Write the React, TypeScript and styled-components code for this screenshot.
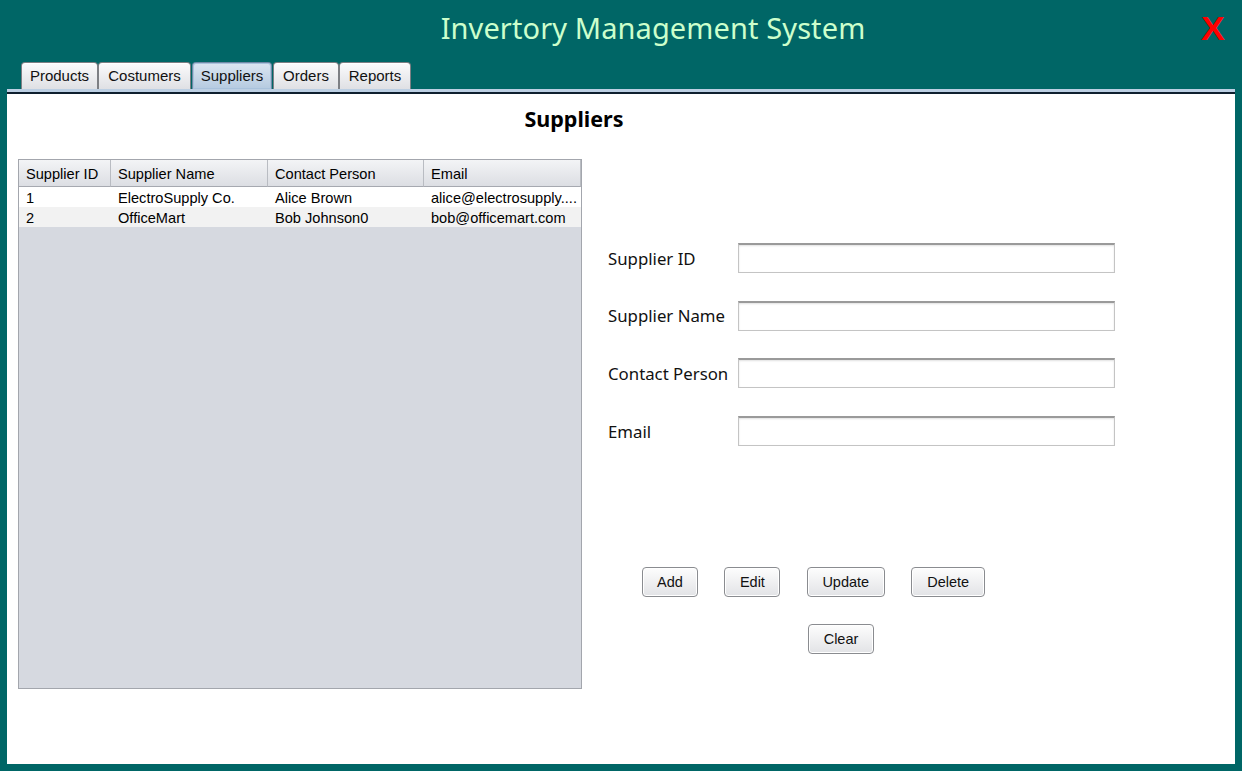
import React from "react";
import styled, { createGlobalStyle } from "styled-components";

const Global = createGlobalStyle`
  html, body { margin: 0; padding: 0; background: #006666; }
  #root { width: 1242px; height: 771px; }
  * { box-sizing: border-box; }
`;

const Frame = styled.div`
  width: 1242px;
  height: 771px;
  display: flex;
  flex-direction: column;
  background: #006666;
`;

const Header = styled.header`
  height: 62px;
  display: flex;
  align-items: center;
  padding: 0 17px 7px 116px;
`;

const Title = styled.h1`
  flex: 1;
  margin: 0;
  text-align: center;
  font-family: "Noto Sans", "Open Sans", sans-serif;
  font-weight: 400;
  font-size: 29px;
  color: #ccffcc;
  letter-spacing: 0.1px;
`;

const Close = styled.span`
  width: 24px;
  margin-left: 11px;
  font-family: "Liberation Sans", Arial, sans-serif;
  font-weight: 700;
  font-size: 34px;
  line-height: 1;
  color: #ff0000;
  text-align: center;
  transform: scaleX(1.05);
`;

const TabRow = styled.nav`
  height: 27px;
  margin: 0 7px;
  padding-left: 14px;
  display: flex;
  align-items: flex-end;
`;

const Tab = styled.div<{ $active?: boolean; $w: number }>`
  width: ${(p) => p.$w}px;
  height: 27px;
  padding-bottom: 1px;
  margin: 0 ${(p) => (p.$active ? "1px" : "0")};
  display: flex;
  align-items: center;
  justify-content: center;
  font-family: "Liberation Sans", Arial, sans-serif;
  font-size: 15px;
  color: #111;
  border: 1px solid ${(p) => (p.$active ? "#6f8aa6" : "#7d7f84")};
  border-bottom: none;
  border-radius: 4px 4px 0 0;
  background: ${(p) =>
    p.$active
      ? "linear-gradient(#dbe6f1, #b5cae0)"
      : "linear-gradient(#fbfbfc, #dfe0e4)"};
  box-shadow: ${(p) => (p.$active ? "inset 0 0 0 1px #a9c2dc" : "inset 0 1px 0 #fff")};
`;

const Strip = styled.div`
  height: 5px;
  margin: 0 7px;
  background: #bccfe3;
  border-bottom: 2px solid #0f1f2e;
`;

const Panel = styled.main`
  flex: 1;
  margin: 0 7px 7px;
  background: #fff;
  display: flex;
  flex-direction: column;
`;

const Heading = styled.h2`
  margin: 0;
  height: 65px;
  padding: 10px 94px 0 0;
  text-align: center;
  font-family: "Noto Sans", "Open Sans", sans-serif;
  font-weight: 700;
  font-size: 21.5px;
  color: #000;
`;

const Body = styled.div`
  display: flex;
  padding-left: 11px;
`;

const Table = styled.div`
  width: 564px;
  height: 530px;
  border: 1px solid #a3a6ad;
  background: #d6d9e0;
  font-family: "Liberation Sans", Arial, sans-serif;
  font-size: 14.6px;
  color: #000;
`;

const Grid = styled.div`
  display: grid;
  grid-template-columns: 92px 157px 156px 157px;
`;

const HeadCell = styled.div`
  height: 27px;
  padding: 1px 7px 0;
  display: flex;
  align-items: center;
  background: linear-gradient(#f3f4f6, #dcdee3);
  border-right: 1px solid #b9bcc2;
  border-bottom: 1px solid #a6a9b0;
  &:last-child { border-right: none; }
`;

const Cell = styled.div<{ $alt?: boolean }>`
  height: 20px;
  padding: 2px 7px 0;
  display: flex;
  align-items: center;
  white-space: nowrap;
  overflow: hidden;
  background: ${(p) => (p.$alt ? "#f2f2f2" : "#fff")};
`;

const Form = styled.section`
  margin-left: 26px;
  padding-top: 84px;
  display: flex;
  flex-direction: column;
`;

const Fields = styled.div`
  display: grid;
  grid-template-columns: 130px 377px;
  row-gap: 27.7px;
  align-items: center;
`;

const Label = styled.label`
  font-family: "Noto Sans", "Open Sans", sans-serif;
  font-size: 16.8px;
  color: #111;
`;

const Input = styled.input`
  height: 30px;
  width: 377px;
  border: 1px solid #c4c4c4;
  border-top: 2px solid #9a9a9a;
  box-shadow: inset 0 1px 2px rgba(0, 0, 0, 0.12);
  background: #fff;
  outline: none;
`;

const Buttons = styled.div`
  margin-top: 121px;
  padding-left: 34px;
  display: flex;
  gap: 26.4px;
`;

const ClearRow = styled.div`
  margin-top: 27px;
  padding-left: 200px;
  display: flex;
`;

const Button = styled.button<{ $w: number }>`
  width: ${(p) => p.$w}px;
  height: 30px;
  padding: 0;
  font-family: "Liberation Sans", Arial, sans-serif;
  font-size: 14.5px;
  color: #111;
  border: 1px solid #8a8c90;
  border-radius: 4px;
  background: linear-gradient(#fdfdfd, #e2e3e6);
  box-shadow: inset 0 0 0 1px #fff;
`;

const rows = [
  ["1", "ElectroSupply Co.", "Alice Brown", "alice@electrosupply...."],
  ["2", "OfficeMart", "Bob Johnson0", "bob@officemart.com"],
];

export default function App() {
  return (
    <Frame>
      <Global />
      <Header>
        <Title>Invertory Management System</Title>
        <Close>X</Close>
      </Header>
      <TabRow>
        <Tab $w={77}>Products</Tab>
        <Tab $w={93}>Costumers</Tab>
        <Tab $active $w={80}>Suppliers</Tab>
        <Tab $w={66}>Orders</Tab>
        <Tab $w={72}>Reports</Tab>
      </TabRow>
      <Strip />
      <Panel>
        <Heading>Suppliers</Heading>
        <Body>
          <Table>
            <Grid>
              <HeadCell>Supplier ID</HeadCell>
              <HeadCell>Supplier Name</HeadCell>
              <HeadCell>Contact Person</HeadCell>
              <HeadCell>Email</HeadCell>
              {rows.map((r, i) =>
                r.map((c, j) => (
                  <Cell key={`${i}-${j}`} $alt={i % 2 === 1}>
                    {c}
                  </Cell>
                ))
              )}
            </Grid>
          </Table>
          <Form>
            <Fields>
              <Label>Supplier ID</Label>
              <Input />
              <Label>Supplier Name</Label>
              <Input />
              <Label>Contact Person</Label>
              <Input />
              <Label>Email</Label>
              <Input />
            </Fields>
            <Buttons>
              <Button $w={56}>Add</Button>
              <Button $w={56}>Edit</Button>
              <Button $w={78}>Update</Button>
              <Button $w={74}>Delete</Button>
            </Buttons>
            <ClearRow>
              <Button $w={66}>Clear</Button>
            </ClearRow>
          </Form>
        </Body>
      </Panel>
    </Frame>
  );
}
